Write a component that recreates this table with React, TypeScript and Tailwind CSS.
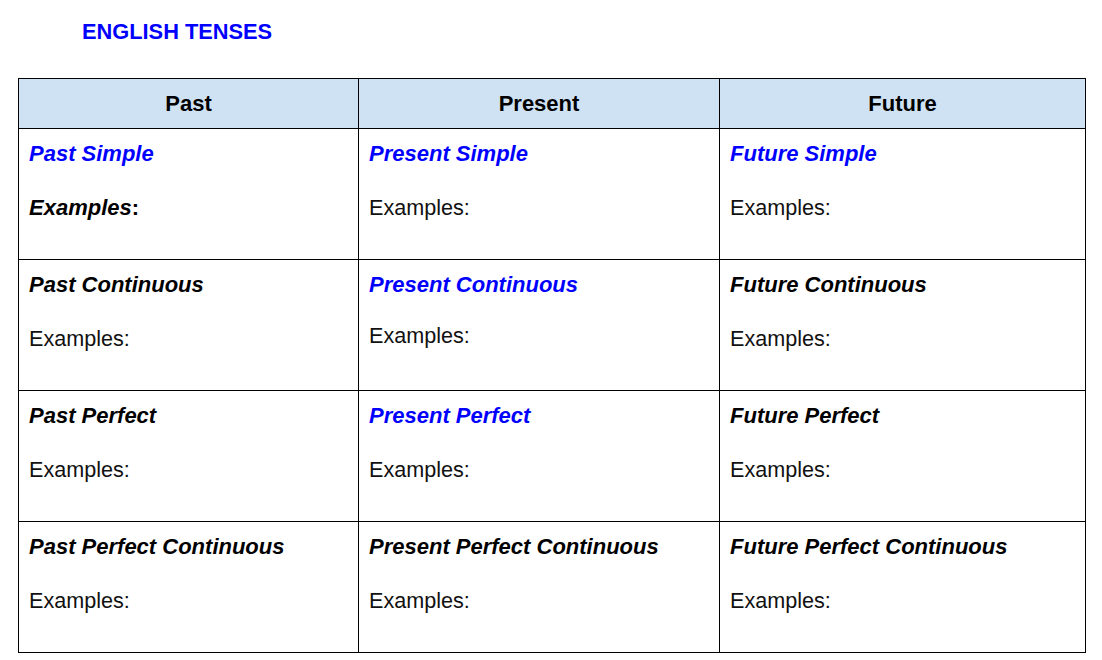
import React from "react";

type Cell = {
  title: string;
  blue?: boolean;
  gap?: string;
  boldExamples?: boolean;
};

const rows: Cell[][] = [
  [
    { title: "Past Simple", blue: true, boldExamples: true },
    { title: "Present Simple", blue: true },
    { title: "Future Simple", blue: true },
  ],
  [
    { title: "Past Continuous" },
    { title: "Present Continuous", blue: true, gap: "mt-[24px]" },
    { title: "Future Continuous" },
  ],
  [
    { title: "Past Perfect" },
    { title: "Present Perfect", blue: true },
    { title: "Future Perfect" },
  ],
  [
    { title: "Past Perfect Continuous" },
    { title: "Present Perfect Continuous" },
    { title: "Future Perfect Continuous" },
  ],
];

const headers = ["Past", "Present", "Future"];

export default function App() {
  return (
    <div
      className="w-[1102px] h-[660px] bg-white text-black overflow-hidden"
      style={{ fontFamily: '"Liberation Sans", Arial, sans-serif' }}
    >
      <div className="pt-[18px] pl-[82px] text-[21.8px] leading-[27px] font-bold text-[#0000ff]">
        ENGLISH TENSES
      </div>
      <div className="mt-[33px] ml-[18px] w-[1068px] border-l border-t border-black grid grid-cols-[340px_361px_366px] text-[22px] leading-[27px]">
        {headers.map((h) => (
          <div
            key={h}
            className="h-[50px] bg-[#cfe2f3] border-r border-b border-black text-center font-bold pt-[11px]"
          >
            {h}
          </div>
        ))}
        {rows.map((row, ri) =>
          row.map((c, ci) => (
            <div
              key={`${ri}-${ci}`}
              className="h-[131px] border-r border-b border-black px-[10px] pt-[11px] flex flex-col"
            >
              <div
                className={`font-bold italic ${c.blue ? "text-[#0000ff]" : "text-black"}`}
              >
                {c.title}
              </div>
              <div className={`text-[#111] text-[21.6px] ${c.gap ?? "mt-[27px]"}`}>
                {c.boldExamples ? (
                  <span className="font-bold text-black text-[22px]">
                    <span className="italic">Examples</span>:
                  </span>
                ) : (
                  "Examples:"
                )}
              </div>
            </div>
          ))
        )}
      </div>
    </div>
  );
}
